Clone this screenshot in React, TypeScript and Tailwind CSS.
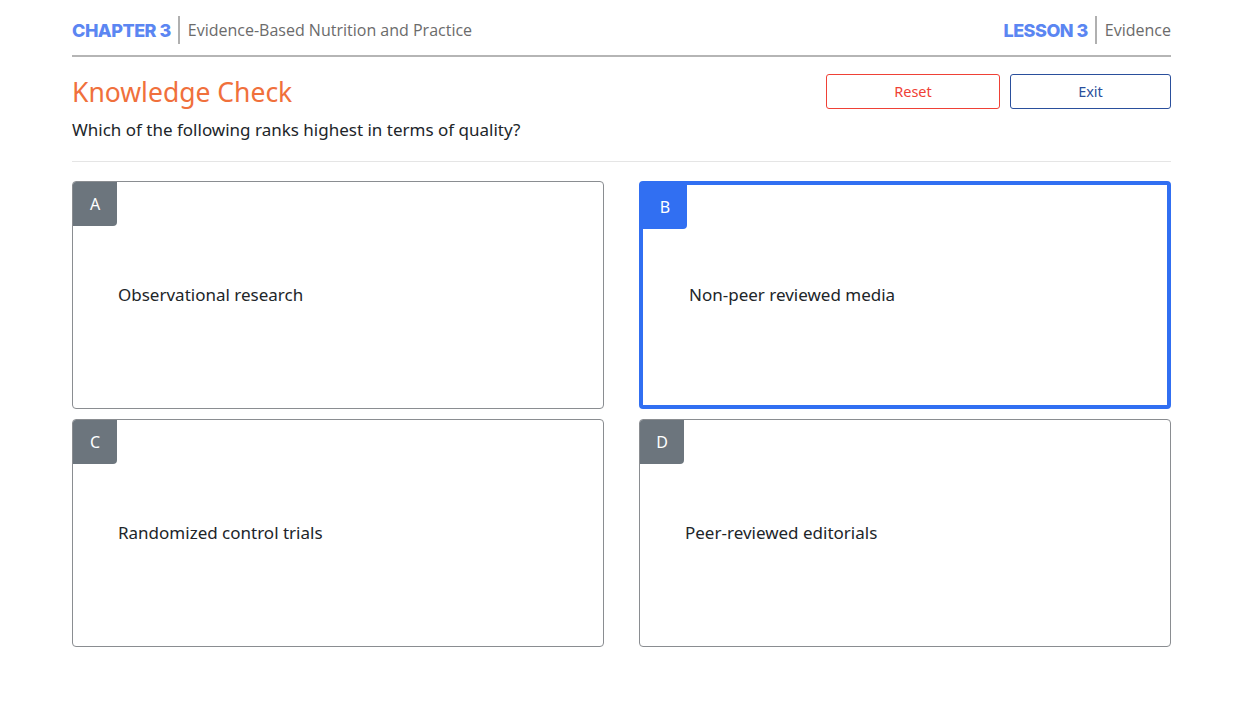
import React, { useState } from 'react'

const options = [
  { key: 'A', label: 'Observational research' },
  { key: 'B', label: 'Non-peer reviewed media' },
  { key: 'C', label: 'Randomized control trials' },
  { key: 'D', label: 'Peer-reviewed editorials' },
]

export default function App() {
  const [selected, setSelected] = useState<string | null>('B')

  return (
    <div className="min-h-screen bg-white font-['Open_Sans','Noto_Sans',sans-serif]">
      <div className="ml-[72px] w-[1099px] pt-[16px]">
        {/* header */}
        <div className="flex items-center justify-between border-b-2 border-[#b5b5b5] pb-[11px]">
          <div className="flex items-center">
            <span className="font-['Inter',sans-serif] text-[18px] font-extrabold tracking-[-0.5px] text-[#5b86f2]">
              CHAPTER 3
            </span>
            <span className="ml-[7px] mr-[8px] h-[28px] w-[2px] bg-[#b0b0b0]" />
            <span className="text-[16px] text-[#6b6b6b]">Evidence-Based Nutrition and Practice</span>
          </div>
          <div className="flex items-center">
            <span className="font-['Inter',sans-serif] text-[18px] font-extrabold tracking-[-0.5px] text-[#5b86f2]">
              LESSON 3
            </span>
            <span className="ml-[7px] mr-[8px] h-[28px] w-[2px] bg-[#b0b0b0]" />
            <span className="text-[16px] text-[#6b6b6b]">Evidence</span>
          </div>
        </div>

        {/* title row */}
        <div className="flex items-start justify-between border-b border-[#e5e5e5] pb-[18px] pt-[17px]">
          <div>
            <h1 className="font-['Noto_Sans',sans-serif] text-[26.5px] leading-[36px] text-[#f0703c]">Knowledge Check</h1>
            <p className="mt-[7px] font-['Noto_Sans',sans-serif] text-[17px] leading-[26px] text-[#212529]">
              Which of the following ranks highest in terms of quality?
            </p>
          </div>
          <div className="flex gap-[10px]">
            <button
              onClick={() => setSelected(null)}
              className="h-[35px] w-[174px] rounded-[3px] border border-[#ef4136] font-['Noto_Sans',sans-serif] text-[14.5px] text-[#ef4136]"
            >
              Reset
            </button>
            <button className="h-[35px] w-[161px] rounded-[3px] border border-[#2a4f9c] font-['Noto_Sans',sans-serif] text-[14.5px] text-[#2a4f9c]">
              Exit
            </button>
          </div>
        </div>

        {/* options */}
        <div className="mt-[19px] grid grid-cols-2 gap-x-[35px] gap-y-[10px]">
          {options.map((o) => {
            const active = selected === o.key
            return (
              <button
                key={o.key}
                onClick={() => setSelected(o.key)}
                className={
                  active
                    ? 'relative flex h-[228px] items-center rounded-[4px] border-4 border-[#316ff2] bg-white pl-[46px] text-left'
                    : 'relative flex h-[228px] items-center rounded-[4px] border border-[#8a8d91] bg-white pl-[45px] text-left'
                }
              >
                <span
                  className={
                    active
                      ? 'absolute left-0 top-0 flex h-[44px] w-[44px] items-center justify-center rounded-br-[4px] bg-[#316ff2] font-["Noto_Sans",sans-serif] text-[16px] text-white'
                      : 'absolute left-0 top-0 flex h-[44px] w-[44px] items-center justify-center rounded-br-[4px] rounded-tl-[3px] bg-[#6c757d] font-["Noto_Sans",sans-serif] text-[16px] text-white'
                  }
                >
                  {o.key}
                </span>
                <span className="font-['Noto_Sans',sans-serif] text-[17px] text-[#212529]">{o.label}</span>
              </button>
            )
          })}
        </div>
      </div>
    </div>
  )
}
